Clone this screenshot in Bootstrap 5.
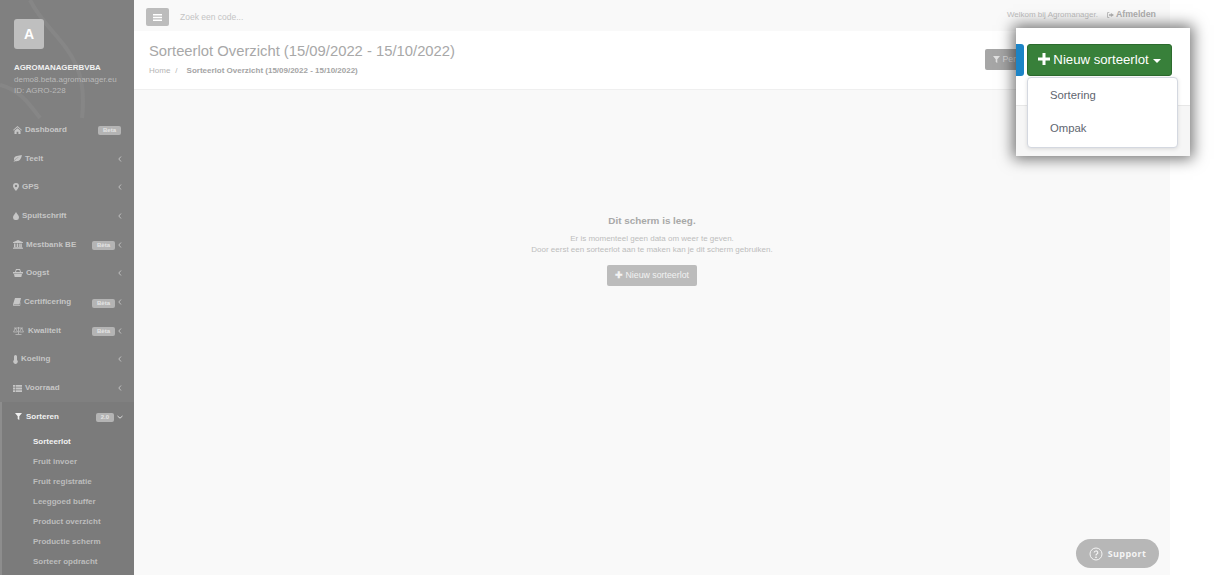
<!DOCTYPE html>
<html lang="nl">
<head>
<meta charset="utf-8">
<title>Sorteerlot Overzicht</title>
<link href="https://cdn.jsdelivr.net/npm/bootstrap@5.3.0/dist/css/bootstrap.min.css" rel="stylesheet">
<style>
html,body{height:575px;overflow:hidden;background:#fff}
body{font-family:"Liberation Sans",Arial,sans-serif;font-size:9px;color:#a8a8a8;position:relative}
.page-wrap{width:1170px;height:575px}
.side{width:134px;flex:none;background-color:#808080;color:#c8c8c8;height:575px;overflow:hidden;
 background-image:url("data:image/svg+xml,%3Csvg xmlns='http://www.w3.org/2000/svg' width='134' height='120' fill='none' stroke='%23868686' stroke-width='4'%3E%3Cpath d='M30 0C50 40 90 50 82 118M0 85C20 90 30 105 40 118'/%3E%3C/svg%3E");background-repeat:no-repeat}
.side>*{flex:none}
.prof{padding:19px 14px 0;height:115.6px}
.avatar{width:30px;height:30px;background:#bfbfbf;border-radius:3px;color:#fff;font-size:14px;font-weight:700;line-height:30px;text-align:center}
.pname{margin-top:13px;font-size:7.9px;font-weight:700;color:#f0f0f0;line-height:12px;white-space:nowrap}
.pmeta{font-size:8px;line-height:11px;color:#b9b9b9;white-space:nowrap}
.mitem{height:28.7px;padding:0 12px 0 13px;font-size:8px;font-weight:700;color:#c6c6c6;display:flex;align-items:center;white-space:nowrap}
.mitem>svg:first-child{flex:none;fill:#c6c6c6;margin-right:3px}
.mchev{flex:none;margin-left:3px;display:block}
.mchev.ms-auto{margin-left:auto!important}
.bdg{background:#b4b4b4;color:#e4e4e4;font-size:6px;font-weight:700;line-height:9px;padding:0 5px;border-radius:2px;margin-top:2px}
.gapk{margin-left:1px}
.mgroup{background:#7b7b7b;border-left:2px solid #8d8d8d;height:200px}
.mgroup .mitem{color:#f0f0f0;padding-left:13px}
.mgroup .mitem>svg:first-child{fill:#f0f0f0}
.subm{display:flex;flex-direction:column;padding-left:31px;font-size:8px;font-weight:700;color:#bdbdbd;margin-top:1px}
.subm span{height:20px;line-height:20px}
.subm .cur{color:#f2f2f2}
.mainp{width:1036px;flex:none;background:#f9f9f9;height:575px}
.topb{height:31px;padding:8px 12px 0;gap:11px}
.menu-btn{width:23px;height:18px;background:#bcbcbc;border-radius:2px;display:flex;align-items:center;justify-content:center}
.qsearch{font-size:8.5px;color:#c4c4c4;line-height:18px}
.welcome{font-size:8px;color:#bdbdbd;margin-left:auto;margin-right:2px;line-height:16px;margin-top:-2px;white-space:nowrap}
.logout{font-weight:700;color:#b0b0b0;margin-left:9px;font-size:8.8px}
.logout svg{margin-right:2px}
.hdr{height:59px;background:#fff;border-bottom:1px solid #efefef;padding:11px 15px 0}
.hdr h2{font-size:14.8px;font-weight:400;color:#a8a8a8;line-height:18px;margin:0}
.crumb{font-size:8px;line-height:12px;margin-top:5px;color:#b4b4b4;display:flex;gap:5px;white-space:nowrap}
.crumb b{color:#a4a4a4;margin-left:4px}
.per-btn{position:absolute;left:985px;top:49px;width:35px;height:21px;background:#a6a6a6;border-radius:2px;color:#d8d8d8;font-size:8.8px;line-height:21px;padding-left:8px;overflow:hidden;white-space:nowrap}
.empt{text-align:center;padding-top:124px}
.empt h3{font-size:9.9px;font-weight:700;color:#a8a8a8;margin:0;line-height:14px}
.empt p{font-size:8px;color:#bdbdbd;line-height:11px;margin:5px 0 0}
.new-ghost{display:inline-block;background:#bcbcbc;color:#f2f2f2;border-radius:2px;font-size:8.8px;line-height:21px;padding:0 8px;margin-top:10px;font-weight:400}
.supp{position:absolute;left:1076px;top:539px;width:83px;height:29px;border-radius:15px;background:#b7b7b7;color:#f4f4f4;font-family:"Open Sans",sans-serif;font-weight:700;font-size:9px;letter-spacing:.4px;display:flex;align-items:center;justify-content:center;gap:5px}
.pop{position:absolute;left:1016px;top:28px;width:174px;height:128px;background:#fff;box-shadow:0 0 14px 3px rgba(0,0,0,.55);overflow:hidden}
.pop-fill{position:absolute;left:0;right:0;top:77px;bottom:0;background:#f6f6f6;border-top:1px solid #e7e7e7}
.pop-blue{position:absolute;left:0;top:16px;width:8px;height:32px;background:#1c84c6;border-radius:0 3px 3px 0}
.pop-green{position:absolute;left:11px;top:16px;width:145px;height:32px;padding:0;background:#38803a;border:1px solid #2c6b2e;border-radius:3px;color:#fff;font-size:13.2px;line-height:30px;white-space:nowrap}
.pop-green:hover{background:#38803a;color:#fff}
.caret-d{display:inline-block;width:0;height:0;border-left:4px solid transparent;border-right:4px solid transparent;border-top:4px solid #fff;vertical-align:middle;margin-left:1px}
.pop-menu{position:absolute;left:11px;top:49px;width:151px;height:71px;min-width:0;padding:1px 0;margin:0;display:block;border:1px solid #d4d8e0;border-radius:4px;box-shadow:0 1px 4px rgba(0,0,0,.12);background:#fff}
.pop-menu .dropdown-item{padding:0 0 0 22px;height:33px;line-height:33px;font-size:11.3px;color:#5f6670}
</style>
</head>
<body>
<svg width="0" height="0" class="position-absolute"><defs><path id="chl" d="M3 .5.8 3 3 5.500" fill="none" stroke="#c6c6c6" stroke-width=".9"/></defs></svg>
<div class="page-wrap d-flex">
 <aside class="side d-flex flex-column">
  <div class="prof">
   <div class="avatar">A</div>
   <div class="pname">AGROMANAGERBVBA</div>
   <div class="pmeta">demo8.beta.agromanager.eu</div>
   <div class="pmeta">ID: AGRO-228</div>
  </div>
  <div class="mitem"><svg width="9" height="8" viewBox="0 0 10 9"><path d="M5 0 0 4.400l.6.700L5 1.300l4.400 3.800.6-.7zM1.600 5.400V9h2.400V6.400h2V9h2.400V5.400L5 2.400z"/></svg>Dashboard<span class="bdg ms-auto" style="margin-right:1px">Beta</span></div>
  <div class="mitem"><svg width="9" height="7" viewBox="0 0 10 8"><path d="M10 0C6 1 2 .5 1 4c-.2.8 0 1.600.3 2C3 3.500 5 3 6.500 2.500 5 3.500 2.500 4.500.5 7.500l.7.5.7-1.200C5 7.500 9 7 10 0z"/></svg>Teelt<svg class="mchev ms-auto" width="4" height="6" viewBox="0 0 4 6"><use href="#chl"/></svg></div>
  <div class="mitem"><svg width="6" height="8" viewBox="0 0 6 8"><path fill-rule="evenodd" d="M3 0a3 3 0 0 0-3 3c0 1.700 3 5 3 5s3-3.300 3-5a3 3 0 0 0-3-3zm0 1.800a1.200 1.200 0 1 1 0 2.400 1.200 1.200 0 0 1 0-2.400z"/></svg>GPS<svg class="mchev ms-auto" width="4" height="6" viewBox="0 0 4 6"><use href="#chl"/></svg></div>
  <div class="mitem"><svg width="6" height="8" viewBox="0 0 6 8"><path d="M3 0C2 2 0 3.500 0 5.200A3 2.900 0 0 0 6 5.200C6 3.500 4 2 3 0z"/></svg>Spuitschrift<svg class="mchev ms-auto" width="4" height="6" viewBox="0 0 4 6"><use href="#chl"/></svg></div>
  <div class="mitem"><svg width="10" height="9" viewBox="0 0 10 9"><path d="M5 0 0 2.200V3h10v-.8zM1 3.500h1.500V7H1zm2.700 0h1.500V7H3.700zm2.500 0h1.500V7H6.200zm2 0H9V7h-.8zM.5 7.300h9V8h-9zM0 8.200h10V9H0z"/></svg>Mestbank BE<span class="bdg ms-auto">Bèta</span><svg class="mchev" width="4" height="6" viewBox="0 0 4 6"><use href="#chl"/></svg></div>
  <div class="mitem"><svg width="10" height="8" viewBox="0 0 10 8"><path d="M3 0 2 3h1l.6-2h2.800L7 3h1L7 0zM0 3h10v1.500H0zm1 2h8L8.300 8H1.700z"/></svg>Oogst<svg class="mchev ms-auto" width="4" height="6" viewBox="0 0 4 6"><use href="#chl"/></svg></div>
  <div class="mitem"><svg width="8" height="8" viewBox="0 0 8 8"><path d="M2 0h6L6.500 6.500H1C.6 6.500.6 7.300 1 7.300h6L7.700 4 8 4.500 7 8H1C0 8-.2 7 .1 6z"/></svg>Certificering<span class="bdg ms-auto">Bèta</span><svg class="mchev" width="4" height="6" viewBox="0 0 4 6"><use href="#chl"/></svg></div>
  <div class="mitem"><svg width="11" height="8" viewBox="0 0 11 8"><path d="M5.500 0v7M2.500 7.500h6M1 1h9M2.500 1 .5 5h4zM8.500 1l-2 4h4z" fill="none" stroke="#c6c6c6" stroke-width=".7"/></svg><span class="gapk">Kwaliteit</span><span class="bdg ms-auto">Bèta</span><svg class="mchev" width="4" height="6" viewBox="0 0 4 6"><use href="#chl"/></svg></div>
  <div class="mitem"><svg width="5" height="9" viewBox="0 0 5 9"><path d="M1 1.500a1.500 1.500 0 0 1 3 0V5a2.200 2.200 0 1 1-3 0z"/></svg>Koeling<svg class="mchev ms-auto" width="4" height="6" viewBox="0 0 4 6"><use href="#chl"/></svg></div>
  <div class="mitem"><svg width="9" height="7" viewBox="0 0 9 7"><path d="M0 0h2v1.800H0zm2.600 0H9v1.800H2.600zM0 2.600h2v1.800H0zm2.600 0H9v1.800H2.600zM0 5.200h2V7H0zm2.600 0H9V7H2.600z"/></svg>Voorraad<svg class="mchev ms-auto" width="4" height="6" viewBox="0 0 4 6"><use href="#chl"/></svg></div>
  <div class="mgroup">
   <div class="mitem"><svg width="7" height="7" viewBox="0 0 7 7"><path d="M0 0h7L4.300 3.200V7L2.700 6V3.200z"/></svg><span class="gapk">Sorteren</span><span class="bdg ms-auto">2.0</span><svg class="mchev" width="6" height="4" viewBox="0 0 6 4" style="margin-right:-1px"><path d="M.5 1 3 3.200 5.500 1" fill="none" stroke="#e8e8e8" stroke-width=".9"/></svg></div>
   <div class="subm">
    <span class="cur">Sorteerlot</span><span>Fruit invoer</span><span>Fruit registratie</span><span>Leeggoed buffer</span><span>Product overzicht</span><span>Productie scherm</span><span>Sorteer opdracht</span>
   </div>
  </div>
 </aside>
 <main class="mainp">
  <div class="topb d-flex">
   <div class="menu-btn"><svg width="9" height="7" viewBox="0 0 9 7" fill="#fff"><path d="M0 0h9v1.400H0zm0 2.800h9v1.400H0zm0 2.800h9V7H0z"/></svg></div>
   <div class="qsearch">Zoek een code...</div>
   <div class="welcome">Welkom bij Agromanager.<span class="logout"><svg width="7" height="6" viewBox="0 0 9 7" fill="#b0b0b0"><path d="M0 1a1 1 0 0 1 1-1h2v1H1v5h2v1H1a1 1 0 0 1-1-1zM5 1l4 2.500L5 6V4.500H2.500v-2H5z"/></svg>Afmelden</span></div>
  </div>
  <div class="hdr">
   <h2>Sorteerlot Overzicht (15/09/2022 - 15/10/2022)</h2>
   <div class="crumb"><span>Home</span><span>/</span><b>Sorteerlot Overzicht (15/09/2022 - 15/10/2022)</b></div>
  </div>
  <div class="empt">
   <h3>Dit scherm is leeg.</h3>
   <p>Er is momenteel geen data om weer te geven.<br>Door eerst een sorteerlot aan te maken kan je dit scherm gebruiken.</p>
   <span class="new-ghost"><b>✚</b> Nieuw sorteerlot</span>
  </div>
 </main>
</div>
<div class="per-btn"><svg width="7" height="7" viewBox="0 0 7 7" fill="#e0e0e0"><path d="M0 0h7L4.300 3.200V7L2.700 6V3.200z"/></svg> Per</div>
<div class="supp"><svg width="14" height="14" viewBox="0 0 14 14" fill="none" stroke="#f4f4f4"><circle cx="7" cy="7" r="6"/><path d="M5.200 5.500a1.800 1.600 0 1 1 2.600 1.500C7.200 7.400 7 7.700 7 8.500" stroke-width="1.200"/><circle cx="7" cy="10.300" r=".5" fill="#f4f4f4"/></svg>Support</div>
<div class="pop">
 <div class="pop-fill"></div>
 <div class="pop-blue"></div>
 <button class="btn pop-green" type="button"><svg width="12" height="12" viewBox="0 0 12 12" fill="#fff" style="vertical-align:-1px"><path d="M4.500 0h3v4.500H12v3H7.500V12h-3V7.500H0v-3h4.500z"/></svg> Nieuw sorteerlot <span class="caret-d"></span></button>
 <ul class="dropdown-menu show pop-menu">
  <li><a class="dropdown-item" href="#">Sortering</a></li>
  <li><a class="dropdown-item" href="#">Ompak</a></li>
 </ul>
</div>
<script src="https://cdn.jsdelivr.net/npm/bootstrap@5.3.0/dist/js/bootstrap.bundle.min.js"></script>
</body>
</html>
